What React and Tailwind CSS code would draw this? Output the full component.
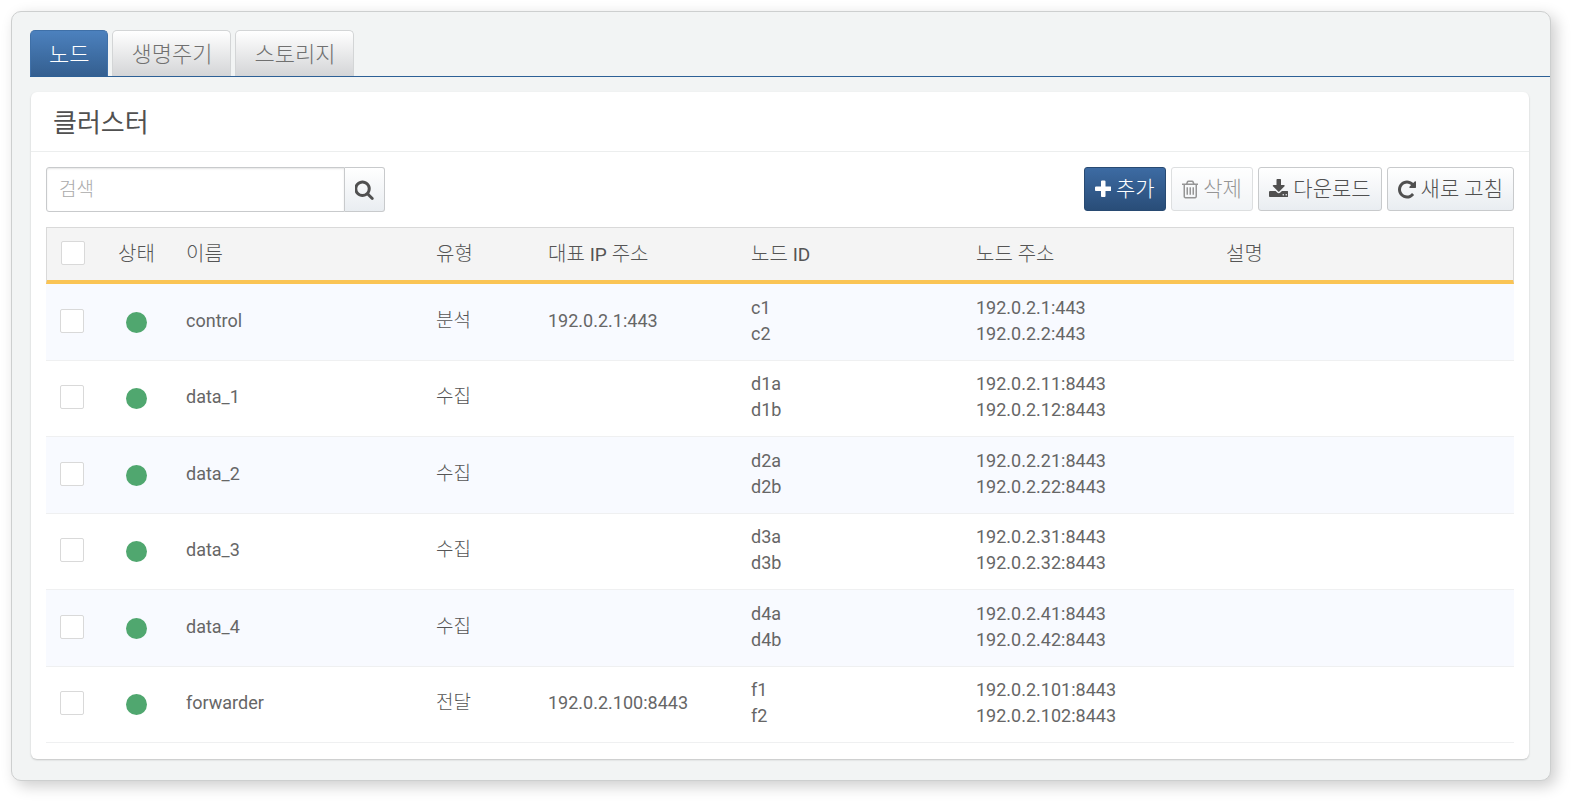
import React, { useState } from 'react';

const tabs = ['노드', '생명주기', '스토리지'];

const nodes = [
  { name: 'control', type: '분석', ip: '192.0.2.1:443', ids: ['c1', 'c2'], addresses: ['192.0.2.1:443', '192.0.2.2:443'] },
  { name: 'data_1', type: '수집', ip: '', ids: ['d1a', 'd1b'], addresses: ['192.0.2.11:8443', '192.0.2.12:8443'] },
  { name: 'data_2', type: '수집', ip: '', ids: ['d2a', 'd2b'], addresses: ['192.0.2.21:8443', '192.0.2.22:8443'] },
  { name: 'data_3', type: '수집', ip: '', ids: ['d3a', 'd3b'], addresses: ['192.0.2.31:8443', '192.0.2.32:8443'] },
  { name: 'data_4', type: '수집', ip: '', ids: ['d4a', 'd4b'], addresses: ['192.0.2.41:8443', '192.0.2.42:8443'] },
  { name: 'forwarder', type: '전달', ip: '192.0.2.100:8443', ids: ['f1', 'f2'], addresses: ['192.0.2.101:8443', '192.0.2.102:8443'] },
];

const icons = {
  search: {
    box: '64 0 1664 1792',
    d: 'M1152 832q0-185-131.5-316.5t-316.5-131.5-316.5 131.5-131.5 316.5 131.5 316.5 316.5 131.5 316.5-131.5 131.5-316.5zm512 832q0 52-38 90t-90 38q-54 0-90-38l-343-342q-179 124-399 124-143 0-273.5-55.5t-225-150-150-225-55.5-273.5 55.5-273.5 150-225 225-150 273.5-55.5 273.5 55.5 225 150 150 225 55.5 273.5q0 220-124 399l343 343q37 37 37 90z',
  },
  plus: {
    box: '192 0 1408 1792',
    d: 'M1600 736v192q0 40-28 68t-68 28h-416v416q0 40-28 68t-68 28h-192q-40 0-68-28t-28-68v-416h-416q-40 0-68-28t-28-68v-192q0-40 28-68t68-28h416v-416q0-40 28-68t68-28h192q40 0 68 28t28 68v416h416q40 0 68 28t28 68z',
  },
  trash: {
    box: '192 0 1408 1792',
    d: 'M704 736v576q0 14-9 23t-23 9h-64q-14 0-23-9t-9-23v-576q0-14 9-23t23-9h64q14 0 23 9t9 23zm256 0v576q0 14-9 23t-23 9h-64q-14 0-23-9t-9-23v-576q0-14 9-23t23-9h64q14 0 23 9t9 23zm256 0v576q0 14-9 23t-23 9h-64q-14 0-23-9t-9-23v-576q0-14 9-23t23-9h64q14 0 23 9t9 23zm128 724v-948h-896v948q0 22 7 40.5t14.5 27 10.5 8.5h832q3 0 10.5-8.5t14.5-27 7-40.5zm-672-1076h448l-48-117q-7-9-17-11h-317q-10 2-17 11zm928 32v64q0 14-9 23t-23 9h-96v948q0 83-47 143.5t-113 60.5h-832q-66 0-113-58.5t-47-141.5v-952h-96q-14 0-23-9t-9-23v-64q0-14 9-23t23-9h309l70-167q15-37 54-63t79-26h320q40 0 79 26t54 63l70 167h309q14 0 23 9t9 23z',
  },
  download: {
    box: '64 0 1664 1792',
    d: 'M1344 1344q0-26-19-45t-45-19-45 19-19 45 19 45 45 19 45-19 19-45zm256 0q0-26-19-45t-45-19-45 19-19 45 19 45 45 19 45-19 19-45zm128-224v320q0 40-28 68t-68 28h-1472q-40 0-68-28t-28-68v-320q0-40 28-68t68-28h465l135 136q58 56 136 56t136-56l136-136h464q40 0 68 28t28 68zm-325-569q17 41-14 70l-448 448q-18 19-45 19t-45-19l-448-448q-31-29-14-70 17-39 59-39h256v-448q0-26 19-45t45-19h256q26 0 45 19t19 45v448h256q42 0 59 39z',
  },
  refresh: {
    box: '128 0 1536 1792',
    d: 'M1664 256v448q0 26-19 45t-45 19h-448q-42 0-59-40-17-39 14-69l138-138q-148-137-349-137-104 0-198.5 40.5t-163.5 109.5-109.5 163.5-40.5 198.5 40.5 198.5 109.5 163.5 163.5 109.5 198.5 40.5q119 0 225-52t179-147q7-10 23-12 15 0 25 9l137 138q9 8 9.5 20.5t-7.5 22.5q-109 132-264 204.5t-327 72.5q-156 0-298-61t-245-164-164-245-61-298 61-298 164-245 245-164 298-61q147 0 284.5 55.5t244.5 156.5l130-129q29-31 70-14 39 17 39 59z',
  },
};

const Icon = ({ name }) => (
  <svg viewBox={icons[name].box} className="h-[21px] w-auto shrink-0 fill-current" aria-hidden="true">
    <path d={icons[name].d} />
  </svg>
);

const ToolButton = ({ icon, children, className, ...rest }) => (
  <button
    type="button"
    className={`flex h-11 items-center gap-[5px] rounded-[3px] border px-[10px] text-[21px] leading-none whitespace-nowrap ${className}`}
    {...rest}
  >
    <Icon name={icon} />
    <span>{children}</span>
  </button>
);

const lightButton = 'border-[#c8cacc] bg-linear-to-b from-white to-[#e9edf1] text-[#505050]';

const Checkbox = ({ label, checked, onChange }) => (
  <input
    type="checkbox"
    aria-label={label}
    checked={checked}
    onChange={onChange}
    className="block size-6 appearance-none rounded-[2px] border border-[#d9d9d9] bg-white checked:bg-[#35608f]"
  />
);

const App = () => {
  const [activeTab, setActiveTab] = useState(tabs[0]);
  const [query, setQuery] = useState('');
  const [selected, setSelected] = useState([]);

  const rows = nodes.filter(n => n.name.includes(query));
  const allSelected = rows.length > 0 && rows.every(n => selected.includes(n.name));

  const toggle = (name) => {
    setSelected(selected.includes(name) ? selected.filter(n => n !== name) : [...selected, name]);
  };

  return (
    <div className="bg-white pt-[11px] pr-[22px] pb-[22px] pl-[11px] font-['Roboto','Noto_Sans_CJK_KR',sans-serif] font-light text-[#606060]">
      <main className="rounded-[10px] border border-[#cdcfcf] bg-[#f2f4f4] pt-[18px] pb-[21px] pl-[18px] shadow-[5px_5px_15px_rgba(0,0,0,0.2)]">
        <nav className="flex gap-1 border-b border-[#2d6096]" role="tablist">
          {tabs.map(tab => (
            <button
              key={tab}
              type="button"
              role="tab"
              aria-selected={tab === activeTab}
              onClick={() => setActiveTab(tab)}
              className={`h-[46px] rounded-t-[5px] border border-b-0 px-[18px] pt-[2px] text-[22px] leading-none ${
                tab === activeTab
                  ? 'border-[#3f70a8] bg-linear-to-b from-[#4c81be] to-[#345f90] text-white'
                  : 'border-[#d3d5d6] bg-linear-to-b from-white to-[#d4d5d7] text-[#707070]'
              }`}
            >
              {tab}
            </button>
          ))}
        </nav>

        <section className="mt-[15px] mr-[21px] ml-px rounded-[6px] bg-white pb-4 shadow-[0_1px_2px_rgba(0,0,0,0.2)]">
          <h1 className="flex h-[60px] items-center border-b border-[#eceeee] px-[22px] pt-[2px] text-[26px] leading-none font-normal text-[#505050]">
            클러스터
          </h1>

          <div className="px-[15px] pt-[15px]">
            <div className="flex items-start justify-between gap-4">
              <form className="flex h-[45px]" role="search" onSubmit={e => e.preventDefault()}>
                <input
                  type="text"
                  aria-label="검색"
                  placeholder="검색"
                  value={query}
                  onChange={e => setQuery(e.target.value)}
                  className="w-[299px] rounded-l-[3px] border border-[#c8cacc] bg-white px-3 pt-[2px] text-[19px] shadow-[inset_0_1px_2px_rgba(0,0,0,0.1)] outline-none placeholder:text-[#aaa]"
                />
                <button
                  type="submit"
                  aria-label="검색"
                  className="flex w-10 items-center justify-center rounded-r-[3px] border border-l-0 border-[#c8cacc] bg-linear-to-b from-white to-[#e9edf1] text-[#505050]"
                >
                  <Icon name="search" />
                </button>
              </form>

              <div className="flex gap-[5px]">
                <ToolButton icon="plus" className="border-[#284a72] bg-linear-to-b from-[#3d6ba3] to-[#294d78] text-white">추가</ToolButton>
                <ToolButton icon="trash" disabled={!selected.length} className={`${lightButton} disabled:opacity-60`}>삭제</ToolButton>
                <ToolButton icon="download" className={lightButton}>다운로드</ToolButton>
                <ToolButton icon="refresh" className={lightButton}>새로 고침</ToolButton>
              </div>
            </div>

            <table className="mt-[15px] w-full table-fixed border-separate border-spacing-0 text-left text-[18px] leading-[26px]">
              <colgroup>
                <col className="w-[55px]" />
                <col className="w-[71px]" />
                <col className="w-[250px]" />
                <col className="w-[112px]" />
                <col className="w-[203px]" />
                <col className="w-[225px]" />
                <col className="w-[250px]" />
                <col />
              </colgroup>
              <thead>
                <tr className="h-[57px] text-[20px] text-[#555] [&>th]:border-t [&>th]:border-b-4 [&>th]:border-t-[#d9d9d9] [&>th]:border-b-[#fac455] [&>th]:bg-[#f4f4f4] [&>th]:px-[14px] [&>th]:font-light">
                  <th className="border-l border-l-[#d9d9d9] pb-[2px]">
                    <Checkbox
                      label="모두 선택"
                      checked={allSelected}
                      onChange={() => setSelected(allSelected ? [] : rows.map(n => n.name))}
                    />
                  </th>
                  <th className="text-center whitespace-nowrap">상태</th>
                  <th>이름</th>
                  <th>유형</th>
                  <th>대표 <span className="text-[19px] font-normal">IP</span> 주소</th>
                  <th>노드 <span className="text-[19px] font-normal">ID</span></th>
                  <th>노드 주소</th>
                  <th className="border-r border-r-[#d9d9d9]">설명</th>
                </tr>
              </thead>
              <tbody className="font-normal text-[#666]">
                {rows.map(node => (
                  <tr
                    key={node.name}
                    className="odd:h-[77px] odd:bg-[#f8faff] even:h-[76px] [&>td]:border-b [&>td]:border-[#eff0f1] [&>td]:px-[14px]"
                  >
                    <td className="pb-[3px]">
                      <Checkbox
                        label={node.name}
                        checked={selected.includes(node.name)}
                        onChange={() => toggle(node.name)}
                      />
                    </td>
                    <td>
                      <span className="mx-auto block size-[21px] rounded-full bg-[#50a76f]" role="img" aria-label="정상" />
                    </td>
                    <td className="pb-[3px]">{node.name}</td>
                    <td className="pb-[3px] text-[19px] font-light text-[#555]">{node.type}</td>
                    <td className="pb-[3px]">{node.ip}</td>
                    <td className="pb-[3px]">{node.ids.map(id => <div key={id}>{id}</div>)}</td>
                    <td className="pb-[3px]">{node.addresses.map(address => <div key={address}>{address}</div>)}</td>
                    <td />
                  </tr>
                ))}
              </tbody>
            </table>
          </div>
        </section>
      </main>
    </div>
  );
};

export default App;
